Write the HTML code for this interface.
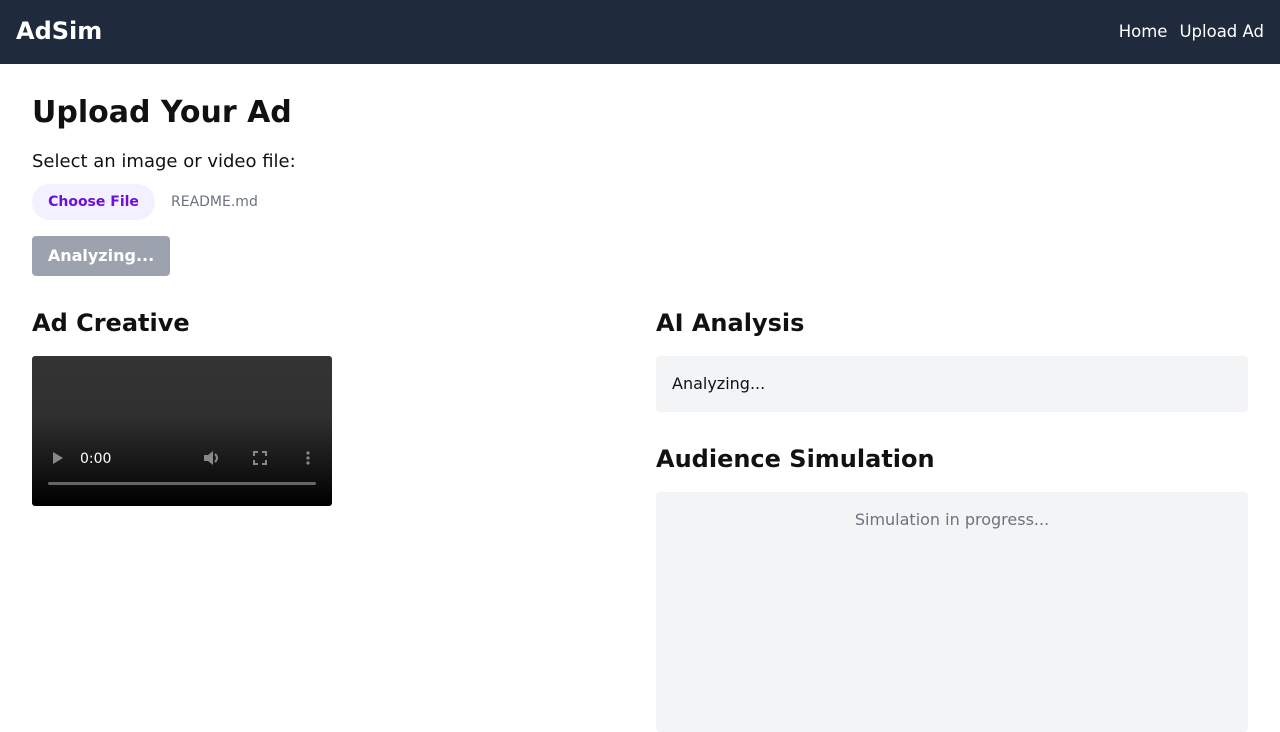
<!DOCTYPE html>
<html><head><meta charset="utf-8"><style>
*{box-sizing:border-box;margin:0;padding:0}
body{width:1280px;height:720px;overflow:hidden;font-family:"DejaVu Sans","Liberation Sans",sans-serif;color:#111;background:#fff;position:relative}
.nav{height:64px;background:#1f2a3c;color:#fff;position:relative}
.logo{position:absolute;left:16px;top:17px;font-size:24px;font-weight:bold}
.links{position:absolute;right:16px;top:22px;font-size:16.5px}
.links span{margin-left:12px}
.abs{position:absolute}
h1{font-size:30px;font-weight:bold}
h2{font-size:24px;font-weight:bold}
</style></head><body>
<div class="nav"><div class="logo">AdSim</div><div class="links"><span>Home</span><span>Upload Ad</span></div></div>
<h1 class="abs" style="left:32px;top:95px">Upload Your Ad</h1>
<div class="abs" style="left:32px;top:151px;font-size:18px">Select an image or video file:</div>
<div class="abs" style="left:32px;top:184px;width:123px;height:36px;border-radius:18px;background:#f3f0ff;color:#6d0fd9;font-weight:bold;font-size:14px;line-height:37px;text-align:center">Choose File</div>
<div class="abs" style="left:171px;top:194px;font-size:14px;color:#6b7280">README.md</div>
<div class="abs" style="left:32px;top:236px;width:138px;height:40px;border-radius:4px;background:#9ca3af;color:#fff;font-weight:bold;font-size:16px;line-height:40px;text-align:center">Analyzing...</div>
<h2 class="abs" style="left:32px;top:309px">Ad Creative</h2>
<div class="abs" style="left:32px;top:356px;width:300px;height:150px;border-radius:3px;background:linear-gradient(#343434 0,#303030 60px,#000 150px)">
 <svg class="abs" style="left:18px;top:95px" width="14" height="14"><path d="M3 1L13 7L3 13Z" fill="#888"/></svg>
 <div class="abs" style="left:48px;top:95px;color:#fff;font-size:14px">0:00</div>
 <svg class="abs" style="left:171px;top:94px" width="20" height="16"><path d="M1 5H5L10 1V15L5 11H1Z" fill="#888"/><path d="M12 4Q16 8 12 12" stroke="#888" stroke-width="2" fill="none"/></svg>
 <svg class="abs" style="left:221px;top:95px" width="14" height="14" fill="none" stroke="#888" stroke-width="2"><path d="M1 5V1H5M9 1H13V5M13 9V13H9M5 13H1V9"/></svg>
 <svg class="abs" style="left:273px;top:94px" width="6" height="16" fill="#888"><circle cx="3" cy="3" r="1.6"/><circle cx="3" cy="8" r="1.6"/><circle cx="3" cy="13" r="1.6"/></svg>
 <div class="abs" style="left:16px;top:126px;width:268px;height:3px;border-radius:2px;background:#666"></div>
</div>
<h2 class="abs" style="left:656px;top:309px">AI Analysis</h2>
<div class="abs" style="left:656px;top:356px;width:592px;height:56px;border-radius:4px;background:#f3f4f6;padding:18px 16px;font-size:16px">Analyzing...</div>
<h2 class="abs" style="left:656px;top:445px">Audience Simulation</h2>
<div class="abs" style="left:656px;top:492px;width:592px;height:240px;border-radius:4px;background:#f3f4f6;padding-top:18px;text-align:center;font-size:16px;color:#6b7280">Simulation in progress...</div>
</body></html>
